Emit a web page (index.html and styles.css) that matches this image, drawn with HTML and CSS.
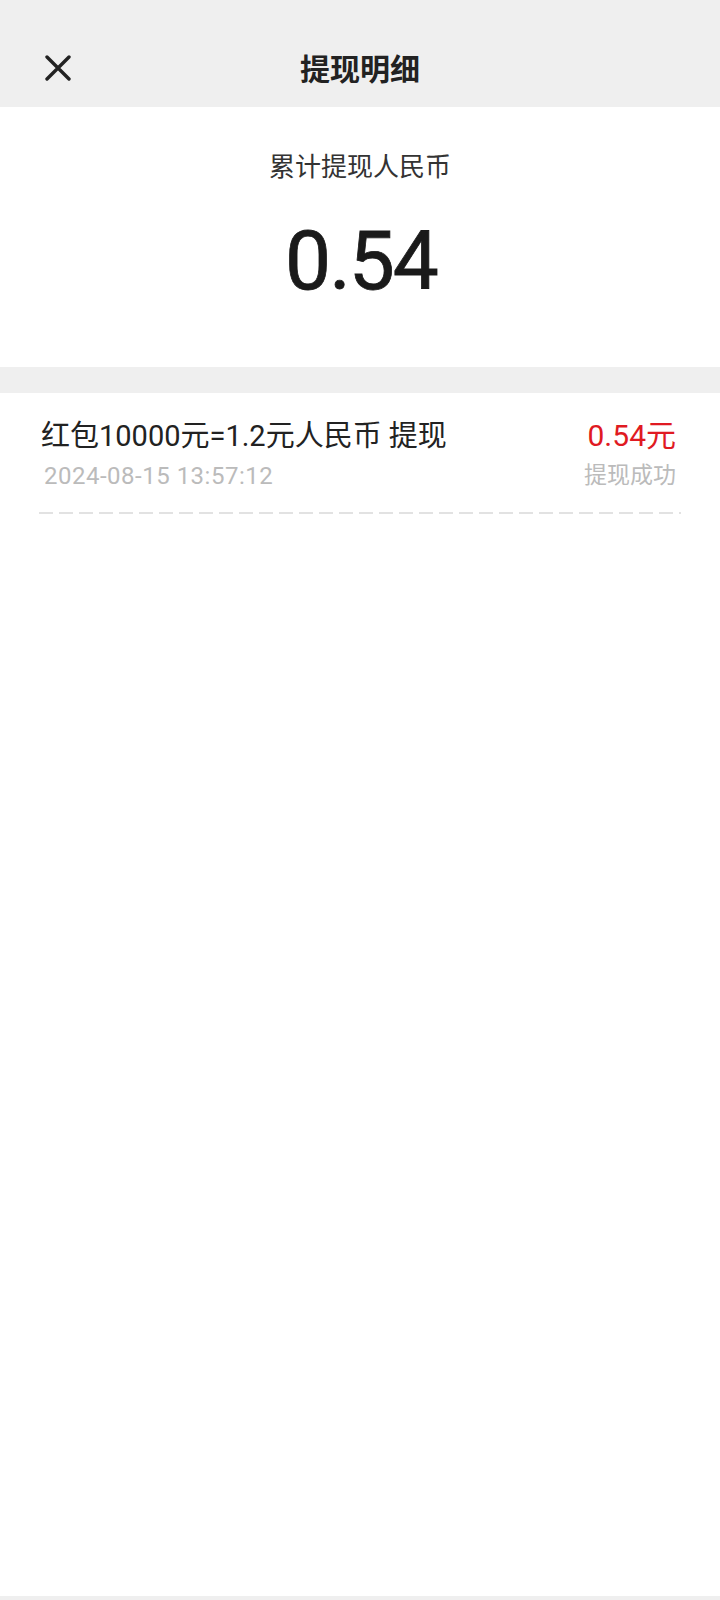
FILE: index.html
```html
<!DOCTYPE html>
<html lang="zh-CN">

<head>
    <meta charset="UTF-8">
    <meta name="viewport" content="width=device-width, initial-scale=1.0">
    <title>提现明细</title>
    <link rel="stylesheet" href="styles.css">
</head>

<body>
    <div class="page">
        <header class="top-bar">
            <span class="close-btn">
                <svg width="26" height="26" viewBox="0 0 26 26">
                    <path d="M2 2 L24 24 M24 2 L2 24" stroke="#222" stroke-width="3.4" stroke-linecap="round" fill="none" />
                </svg>
            </span>
            <h1 class="title">提现明细</h1>
        </header>

        <section class="summary">
            <div class="summary-label">累计提现人民币</div>
            <div class="summary-amount">0.54</div>
        </section>

        <div class="gap"></div>

        <ul class="record-list">
            <li class="record">
                <div class="record-row">
                    <div class="record-info">
                        <div class="record-name">红包10000元=1.2元人民币 提现</div>
                        <div class="record-time">2024-08-15 13:57:12</div>
                    </div>
                    <div class="record-side">
                        <div class="record-money">0.54元</div>
                        <div class="record-status">提现成功</div>
                    </div>
                </div>
                <div class="divider"></div>
            </li>
        </ul>
    </div>
</body>

</html>
```

FILE: styles.css
```css
body {
    margin: 0;
    background-color: #efefef;
    font-family: 'Roboto', 'Noto Sans CJK SC', sans-serif;
    color: #222;
}

.page {
    min-height: calc(100vh - 4px);
    background-color: #fff;
}

.top-bar {
    position: relative;
    height: 80px;
    padding-top: 27px;
    display: flex;
    align-items: center;
    justify-content: center;
    background-color: #efefef;
}

.close-btn {
    position: absolute;
    left: 45px;
    top: 55px;
    width: 26px;
    height: 26px;
    display: flex;
}

.title {
    margin: 0;
    font-size: 30px;
    font-weight: bold;
    color: #222;
    font-family: 'Noto Sans CJK SC', sans-serif;
}

.summary {
    padding: 42px 0 56px;
    text-align: center;
}

.summary-label {
    font-size: 26px;
    line-height: 36px;
    color: #333;
}

.summary-amount {
    margin-top: 26px;
    padding-left: 2px;
    font-size: 82px;
    line-height: 100px;
    letter-spacing: -2px;
    color: #1a1a1a;
    -webkit-text-stroke: 0.8px #1a1a1a;
}

.gap {
    height: 26px;
    background-color: #efefef;
}

.record-list {
    list-style: none;
    margin: 0;
    padding: 0;
}

.record {
    padding-top: 23px;
}

.record-row {
    display: flex;
    justify-content: space-between;
    padding: 0 44px 0 41px;
}

.record-name {
    font-size: 29px;
    line-height: 40px;
    color: #222;
}

.record-time {
    margin: 4px 0 0 3px;
    font-size: 24px;
    line-height: 32px;
    letter-spacing: 0.5px;
    color: #bbb;
}

.record-side {
    text-align: right;
}

.record-money {
    font-size: 30px;
    line-height: 40px;
    color: #e01a22;
}

.record-status {
    margin-top: 4px;
    font-size: 23px;
    line-height: 32px;
    color: #bbb;
}

.divider {
    height: 2px;
    margin: 20px 39px 0;
    background-image: repeating-linear-gradient(to right, #e2e2e2 0 14px, transparent 14px 20px);
}
```
